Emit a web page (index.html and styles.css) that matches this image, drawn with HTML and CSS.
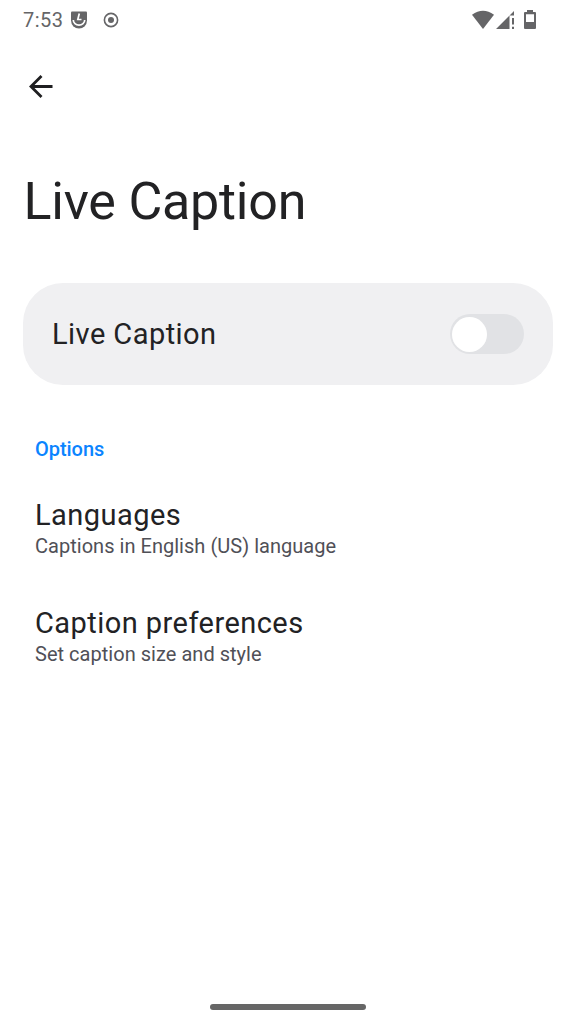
FILE: index.html
```html
<!DOCTYPE html>
<html lang="en">
<head>
<meta charset="utf-8">
<title>Live Caption</title>
<link rel="stylesheet" href="styles.css">
</head>
<body>
<div class="screen">
  <header class="status">
    <span class="time">7:53</span>
    <svg class="badge-icon" width="18" height="18" viewBox="0 0 18 18"><path d="M2 .5h14q1 0 1 1v8a8 8 0 0 1-16 0v-8q0-1 1-1z" fill="#656567"/><path d="M9.300 2.500 7.800 8.500h3.700" fill="none" stroke="#fff" stroke-width="1.700"/><path d="M3.300 9a5.700 5.200 0 0 0 11.400 0" fill="none" stroke="#fff" stroke-width="1.700"/></svg>
    <svg class="record-icon" width="16" height="16" viewBox="0 0 16 16"><circle cx="8" cy="8" r="6.600" fill="none" stroke="#656567" stroke-width="1.600"/><circle cx="8" cy="8" r="3" fill="#656567"/></svg>
    <svg class="system-icons" width="64" height="22" viewBox="0 0 64 22" fill="#656567"><path d="M0 5.800Q11-2.200 22 5.800L11 20z"/><path d="M24 20 37.500 6.500V20zM37.500 6.500l4.500-4.500v4.500zM40 9h2v6.500h-2zM40 17.800h2V20h-2z"/><path fill-rule="evenodd" d="M53 3h2V1h6v2h2q1 0 1 1v15q0 1-1 1H53q-1 0-1-1V4q0-1 1-1zM54 5.300v7.700h8V5.300z"/></svg>
  </header>
  <button class="back" aria-label="Back"><svg width="24" height="24" viewBox="0 0 24 24"><path d="M23.500 11.500H2M12.500 1 2 11.500 12.500 22" fill="none" stroke="#1f1f21" stroke-width="2.800"/></svg></button>
  <h1 class="title">Live Caption</h1>
  <section class="card"><span class="label">Live Caption</span><span class="switch" role="switch" aria-checked="false"><span class="thumb"></span></span></section>
  <main class="options">
    <h2 class="heading">Options</h2>
    <div class="item"><div class="label">Languages</div><div class="summary">Captions in English (US) language</div></div>
    <div class="item"><div class="label">Caption preferences</div><div class="summary">Set caption size and style</div></div>
  </main>
  <div class="home"></div>
</div>
</body>
</html>
```
FILE: styles.css
```css
* { box-sizing: border-box; }
body { margin: 0; background: #fff; font-family: Roboto, sans-serif; color: #222224; }
.screen { height: 1024px; display: flex; flex-direction: column; }
.status { height: 40px; padding: 0 40px 0 23px; display: flex; align-items: center; color: #656567; }
.time { font-size: 20px; letter-spacing: .5px; }
.badge-icon { margin-left: 6px; }
.record-icon { margin-left: 15px; }
.system-icons { margin-left: auto; }
.back { margin: 35px 0 0 28.5px; width: 24px; height: 24px; padding: 0; border: 0; background: none; }
.back svg { display: block; }
.title { margin: 71px 0 0 23.5px; font-size: 52px; line-height: 64px; font-weight: 400; letter-spacing: -.22px; }
.card { margin: 49px 23px 0; height: 102px; border-radius: 40px; background: #f0f0f2; display: flex; align-items: center; justify-content: space-between; padding: 0 29px; }
.label { font-size: 29px; line-height: 36px; letter-spacing: .45px; }
.switch { width: 74px; height: 40px; border-radius: 20px; background: #e1e2e5; padding: 2.5px 2px; }
.thumb { display: block; width: 35px; height: 35px; border-radius: 50%; background: #fff; }
.options { padding: 52px 35px 0; flex: 1; }
.heading { margin: 0 0 36px; font-size: 20px; line-height: 24px; font-weight: 500; letter-spacing: -.05px; color: #0b84ff; }
.item { height: 108px; }
.summary { font-size: 20px; line-height: 26px; color: #505057; letter-spacing: .03px; }
.home { width: 156px; height: 6px; margin: 0 auto 14px; border-radius: 3px; background: #666; }
```
